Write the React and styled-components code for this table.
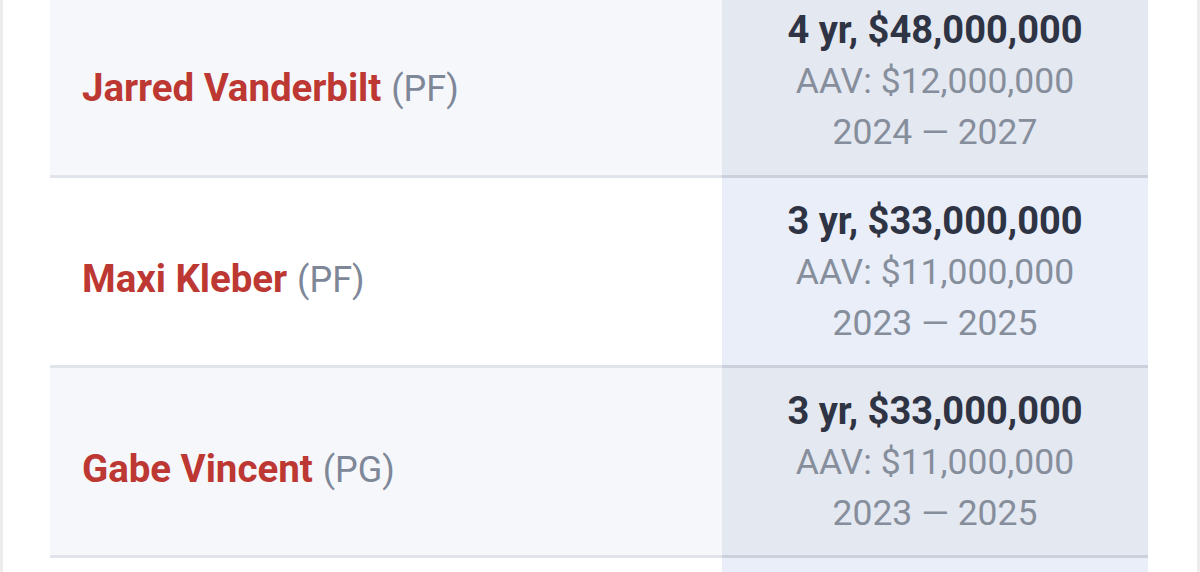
import React from 'react';
import styled, { createGlobalStyle } from 'styled-components';

const GlobalStyle = createGlobalStyle`
  html, body {
    margin: 0;
    padding: 0;
    background: #ffffff;
    font-family: Roboto, "Liberation Sans", Arial, sans-serif;
  }
`;

// page frame with the thin grey edges of the phone screenshot
const Page = styled.div`
  width: 1200px;
  height: 572px;
  overflow: hidden;
  box-sizing: border-box;
  border-left: 3px solid #ececec;
  border-right: 3px solid #ececec;
  padding: 0 49px 0 47px;
`;

const ContractTable = styled.table`
  width: 1098px;
  border-collapse: collapse;
  table-layout: fixed;
  margin-top: -14px;
`;

const Row = styled.tr`
  background-color: ${(props) => (props.$odd ? '#f6f7fb' : '#ffffff')};
  border-bottom: 3px solid #e1e4ea;
`;

const NameCell = styled.td`
  width: 672px;
  height: 190px;
  padding: 14px 0 0 32px;
  box-sizing: border-box;
  vertical-align: middle;
  white-space: nowrap;
`;

const PlayerName = styled.span`
  color: #bd3832;
  font-weight: 700;
  font-size: 38.5px;
  letter-spacing: -0.05px;
`;

const Position = styled.span`
  color: #7e8798;
  font-size: 36px;
  margin-left: 10px;
`;

const DealCell = styled.td`
  padding: 2px 0 0;
  text-align: center;
  vertical-align: middle;
  white-space: nowrap;
  background-color: ${(props) => (props.$odd ? '#e4e8f1' : '#e9eef8')};
  border-bottom: 3px solid #cbd1dc;
`;

const Line = styled.div`
  font-size: ${(props) => (props.$strong ? '38px' : '35.5px')};
  line-height: 51px;
  color: ${(props) => (props.$strong ? '#2f3444' : '#868e9c')};
  font-weight: ${(props) => (props.$strong ? 700 : 400)};
`;

const contracts = [
  { name: 'Jarred Vanderbilt', pos: 'PF', deal: '4 yr, $48,000,000', aav: '$12,000,000', years: '2024 — 2027' },
  { name: 'Maxi Kleber', pos: 'PF', deal: '3 yr, $33,000,000', aav: '$11,000,000', years: '2023 — 2025' },
  { name: 'Gabe Vincent', pos: 'PG', deal: '3 yr, $33,000,000', aav: '$11,000,000', years: '2023 — 2025' },
  { name: '', pos: '', deal: '', aav: '', years: '' },
];

export default function App() {
  return (
    <>
      <GlobalStyle />
      <Page>
        <ContractTable>
          <tbody>
            {contracts.map((c, i) => (
              <Row key={i} $odd={i % 2 === 0}>
                <NameCell>
                  {c.name && (
                    <>
                      <PlayerName>{c.name}</PlayerName>
                      <Position>({c.pos})</Position>
                    </>
                  )}
                </NameCell>
                <DealCell $odd={i % 2 === 0}>
                  {c.deal && (
                    <>
                      <Line $strong>{c.deal}</Line>
                      <Line>AAV: {c.aav}</Line>
                      <Line>{c.years}</Line>
                    </>
                  )}
                </DealCell>
              </Row>
            ))}
          </tbody>
        </ContractTable>
      </Page>
    </>
  );
}
